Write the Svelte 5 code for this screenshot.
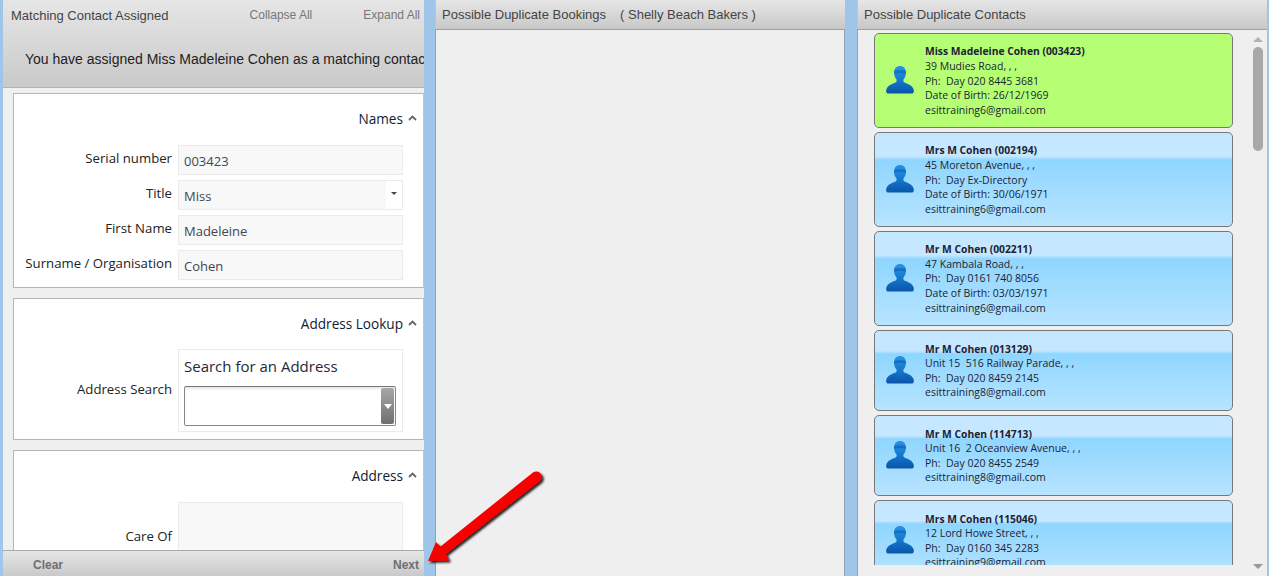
<script>
  const contacts = [
    { name: 'Miss Madeleine Cohen (003423)', lines: ['39 Mudies Road, , ,', 'Ph:  Day 020 8445 3681', 'Date of Birth: 26/12/1969', 'esittraining6@gmail.com'], on: true },
    { name: 'Mrs M Cohen (002194)', lines: ['45 Moreton Avenue, , ,', 'Ph:  Day Ex-Directory', 'Date of Birth: 30/06/1971', 'esittraining6@gmail.com'] },
    { name: 'Mr M Cohen (002211)', lines: ['47 Kambala Road, , ,', 'Ph:  Day 0161 740 8056', 'Date of Birth: 03/03/1971', 'esittraining6@gmail.com'] },
    { name: 'Mr M Cohen (013129)', lines: ['Unit 15  516 Railway Parade, , ,', 'Ph:  Day 020 8459 2145', 'esittraining8@gmail.com'] },
    { name: 'Mr M Cohen (114713)', lines: ['Unit 16  2 Oceanview Avenue, , ,', 'Ph:  Day 020 8455 2549', 'esittraining8@gmail.com'] },
    { name: 'Mrs M Cohen (115046)', lines: ['12 Lord Howe Street, , ,', 'Ph:  Day 0160 345 2283', 'esittraining9@gmail.com'] }
  ];
</script>

<div class="page">
  <section class="col left">
    <header class="assigned">
      <div class="bar">
        <span class="title">Matching Contact Assigned</span>
        <span class="act collapse">Collapse All</span>
        <span class="act">Expand All</span>
      </div>
      <p class="msg">You have assigned Miss Madeleine Cohen as a matching contact</p>
    </header>

    <div class="form">
      <div class="group">
        <div class="ghead">Names {@render chevron()}</div>
        <div class="fields">
          <span class="lab">Serial number</span><div class="inp">003423</div>
          <span class="lab">Title</span>
          <div class="inp sel"><span class="seltext">Miss</span><span class="selbtn"><i></i></span></div>
          <span class="lab">First Name</span><div class="inp">Madeleine</div>
          <span class="lab">Surname / Organisation</span><div class="inp">Cohen</div>
        </div>
      </div>

      <div class="group">
        <div class="ghead">Address Lookup {@render chevron()}</div>
        <div class="fields">
          <span class="lab">Address Search</span>
          <div class="lookup">
            <div class="lookuptitle">Search for an Address</div>
            <div class="combo"><span class="combobtn"><i></i></span></div>
          </div>
        </div>
      </div>

      <div class="group">
        <div class="ghead">Address {@render chevron()}</div>
        <div class="fields">
          <span class="lab">Care Of</span><div class="inp tall"></div>
        </div>
      </div>
    </div>

    <footer class="foot"><span>Clear</span><span>Next</span></footer>
  </section>

  <section class="col mid">
    <header class="head"><span>Possible Duplicate Bookings</span><span class="sub">( Shelly Beach Bakers )</span></header>
    <div class="pane closed"></div>
  </section>

  <section class="col right">
    <header class="head"><span>Possible Duplicate Contacts</span></header>
    <div class="pane list">
      <div class="cards">
        {#each contacts as c}
          <article class="card" class:on={c.on}>
            <svg class="person" viewBox="0 0 30 28" width="30" height="28" aria-hidden="true">
              <path fill="url(#pg)" d="M15 0c3.600 0 6 2.700 6 6.500 0 3-1 5.200-2.500 7-.4 1.500 0 2.600 1.500 3.300 3.500 1.500 7 2.500 8.500 6.200.7 1.800.5 4-1 4.500H2.500c-1.500-.5-1.700-2.700-1-4.500 1.500-3.700 5-4.700 8.500-6.200 1.500-.7 1.900-1.800 1.500-3.300C10 11.700 9 9.500 9 6.500 9 2.700 11.400 0 15 0z" />
              <path fill="#0b5cab" opacity=".55" d="M9.200 5c2.500-.9 9.100-.9 11.600 0 .3 1.200 0 2.300-.6 2.700-2.200-.9-8.200-.9-10.400 0-.6-.4-.9-1.500-.6-2.700z" />
            </svg>
            <div class="info">
              <strong>{c.name}</strong>
              {#each c.lines as l}<span>{l}</span>{/each}
            </div>
          </article>
        {/each}
      </div>
      <div class="scroll">
        <i class="up"></i>
        <div class="track"><div class="thumb"></div></div>
        <i class="down"></i>
      </div>
    </div>
  </section>

  <svg class="arrow" viewBox="0 0 130 110" width="130" height="110" aria-hidden="true">
    <defs>
      <linearGradient id="pg" x1="0" y1="0" x2="0" y2="1">
        <stop offset="0" stop-color="#2a92e6" />
        <stop offset=".5" stop-color="#1578cf" />
        <stop offset="1" stop-color="#0a55a6" />
      </linearGradient>
      <filter id="sh" x="-20%" y="-20%" width="150%" height="150%">
        <feDropShadow dx="2" dy="2" stdDeviation="1.200" flood-color="#000" flood-opacity=".85" />
      </filter>
    </defs>
    <path filter="url(#sh)" fill="#f60000" d="M108 2.500A5.500 5.500 0 0 1 114.500 11.500L21 84 24 90.500 3 91 11 72 15.500 76.500z" />
  </svg>
</div>

{#snippet chevron()}
  <svg class="chev" viewBox="0 0 9 6" width="9" height="6" aria-hidden="true"><path d="M1 5l3.500-3.500L8 5" fill="none" stroke="#666" stroke-width="1.800" /></svg>
{/snippet}

<style>
  :global(body) { margin: 0; background: #9fc5e8; }
  .page {
    position: relative;
    display: flex;
    width: 1269px;
    height: 576px;
    overflow: hidden;
    padding-left: 3px;
    box-sizing: border-box;
    background: #9fc5e8;
    font-family: "Liberation Sans", Arial, sans-serif;
  }
  .col { display: flex; flex-direction: column; height: 576px; background: #efefef; overflow: hidden; }
  .left { width: 421px; }
  .mid { width: 410px; margin-left: 11px; }
  .right { width: 410px; margin-left: 12px; }

  .assigned {
    height: 88px;
    flex: none;
    box-sizing: border-box;
    background: linear-gradient(#e6e6e6, #c9c9c9);
    border-bottom: 1px solid #b4b4b4;
    overflow: hidden;
  }
  .bar { display: flex; align-items: center; height: 30px; padding: 0 4px 0 8px; font-size: 12px; color: #777; }
  .title { flex: 1; font-size: 13px; color: #444; }
  .act { color: #777; }
  .collapse { margin-right: 51px; }
  .msg { margin: 21px 0 0 22px; font-size: 14px; line-height: 17px; color: #222; white-space: nowrap; }

  .form { flex: 1; min-height: 0; overflow: hidden; padding: 5px 0 0 10px; font-family: "Open Sans", sans-serif; }
  .group { background: #fff; border: 1px solid #b5b5b5; border-right-color: #c4c4c4; margin-bottom: 10px; padding-bottom: 7px; }
  .ghead {
    display: flex;
    align-items: center;
    justify-content: flex-end;
    gap: 5px;
    height: 51px;
    box-sizing: border-box;
    padding: 0 6px 2px 0;
    font-size: 13.600px;
    color: #0f1b33;
  }
  .chev { margin-bottom: 1px; }
  .fields { display: grid; grid-template-columns: 158px 225px; column-gap: 6px; row-gap: 5px; align-items: center; }
  .lab { text-align: right; font-size: 13.200px; line-height: 17px; color: #222; margin-bottom: 4px; white-space: nowrap; }
  .inp {
    display: flex;
    align-items: center;
    height: 30px;
    box-sizing: border-box;
    padding: 2.500px 0 0 5px;
    background: #f8f8f8;
    border: 1px solid #ebebeb;
    font-size: 13px;
    color: #3f4756;
  }
  .tall { height: 72px; }
  .sel { padding: 0; background: #fff; }
  .seltext { display: flex; align-items: center; flex: none; width: 207px; height: 100%; box-sizing: border-box; padding: 2.500px 0 0 5px; background: #f8f8f8; }
  .selbtn { flex: 1; display: flex; justify-content: center; padding-bottom: 3px; }
  .selbtn i { border: 3px solid transparent; border-top: 3px solid #444; border-bottom: 0; width: 0; height: 0; }

  .lookup { height: 83px; margin-top: -1px; box-sizing: border-box; padding: 5px 6px 0 5px; border: 1px solid #ebebeb; }
  .lookuptitle { font-size: 15px; line-height: 22px; color: #1f2937; }
  .combo {
    margin-top: 9px;
    height: 40px;
    box-sizing: border-box;
    background: #fff;
    border: 1px solid #888;
    border-top-color: #777;
    box-shadow: inset 0 2px 2px #e8e8e8;
    border-radius: 2px;
    display: flex;
    justify-content: flex-end;
    padding: 1px;
  }
  .combobtn {
    display: flex;
    align-items: center;
    justify-content: center;
    width: 13px;
    border-radius: 2px;
    background: linear-gradient(#a8a8a8, #6f6f6f);
  }
  .combobtn i { border: 4px solid transparent; border-top: 5px solid #fff; border-bottom: 0; }

  .foot {
    position: relative;
    flex: none;
    height: 26px;
    box-sizing: border-box;
    display: flex;
    justify-content: space-between;
    align-items: center;
    padding: 2px 5px 0 30px;
    margin-top: -26px;
    background: linear-gradient(#e6e6e6, #c9c9c9);
    border-top: 1px solid #aaa;
    font-size: 12px;
    font-weight: bold;
    color: #6f6f6f;
  }

  .head {
    flex: none;
    display: flex;
    align-items: center;
    gap: 14px;
    height: 29px;
    box-sizing: border-box;
    padding: 0 6px;
    background: linear-gradient(#e6e6e6, #c8c8c8);
    border-left: 1px solid #c4c4c4;
    font-size: 13px;
    color: #444;
    white-space: nowrap;
  }
  .pane { flex: 1; min-height: 0; background: #efefef; border: 1px solid #8fa3b8; border-width: 1px 0 0 1px; }
  .closed { border-right-width: 1px; }
  .list { display: flex; overflow: hidden; }
  .cards { flex: none; width: 359px; height: 532px; overflow: hidden; margin: 3px 0 0 16px; display: flex; flex-direction: column; gap: 4px; }
  .card {
    flex: none;
    display: flex;
    align-items: center;
    min-height: 81px;
    box-sizing: border-box;
    padding-left: 10px;
    border: 1px solid #76797c;
    border-radius: 5px;
    background: linear-gradient(#c4e7ff 0, #c6e7ff 25%, #8fd6ff 29%, #b8e4ff 100%);
  }
  .card.on { background: #b6ff75; }
  .person { flex: none; }
  .info { display: flex; flex-direction: column; margin-left: 10px; font-family: "Open Sans", sans-serif; font-size: 10.500px; line-height: 14.600px; color: #1c2333; white-space: pre; padding: 10.400px 0 9.600px; }
  .info strong { font-weight: 700; font-size: 10.300px; color: #1c2333; }
  .scroll { flex: none; margin-left: 19px; width: 12px; height: 539px; box-sizing: border-box; display: flex; flex-direction: column; align-items: center; padding-top: 7px; }
  .track { flex: 1; width: 10px; padding-top: 5px; }
  .thumb { width: 10px; height: 104px; background: #a8a8a8; border-radius: 5px; }
  .up { width: 0; height: 0; border: 5px solid transparent; border-bottom: 5px solid #b2b2b2; border-top: 0; }
  .down { width: 0; height: 0; border: 5px solid transparent; border-top: 5px solid #999; border-bottom: 0; }

  .arrow { position: absolute; left: 425px; top: 470px; }
</style>
